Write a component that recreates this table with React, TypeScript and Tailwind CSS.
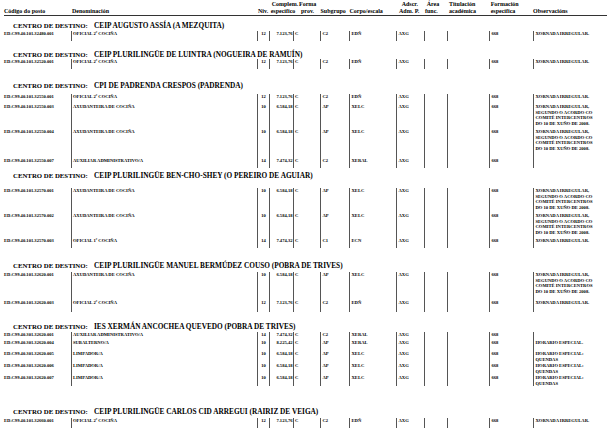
import React from "react";

type R = {
  code: string;
  den: string;
  niv: string;
  comp: string;
  sub: string;
  corpo: string;
  obs: string[];
  h: string;
};
type S = { name: string; mt: string; rmt: string; rows: R[] };

const OBS4 = ["XORNADA IRREGULAR,", "SEGUNDO O ACORDO CO", "COMITÉ INTERCENTROS", "DO 10 DE XUÑO DE 2008."];
const XI = ["XORNADA IRREGULAR."];
const HQ = ["HORARIO ESPECIAL:", "QUENDAS"];

const sections: S[] = [
  {
    name: "CEIP AUGUSTO ASSÍA (A MEZQUITA)",
    mt: "mt-[4.5px]",
    rmt: "mt-[1.75px]",
    rows: [
      { code: "ED.C99.40.101.32480.001", den: "OFICIAL 2ª COCIÑA", niv: "12", comp: "7.123,76", sub: "C2", corpo: "EDÑ", obs: XI, h: "h-[10px]" },
    ],
  },
  {
    name: "CEIP PLURILINGÜE DE LUINTRA (NOGUEIRA DE RAMUÍN)",
    mt: "mt-[8.25px]",
    rmt: "mt-[0.75px]",
    rows: [
      { code: "ED.C99.40.101.32520.001", den: "OFICIAL 2ª COCIÑA", niv: "12", comp: "7.123,76", sub: "C2", corpo: "EDÑ", obs: XI, h: "h-[10px]" },
    ],
  },
  {
    name: "CPI DE PADRENDA CRESPOS (PADRENDA)",
    mt: "mt-[11.25px]",
    rmt: "mt-[4.75px]",
    rows: [
      { code: "ED.C99.40.101.32550.001", den: "OFICIAL 2ª COCIÑA", niv: "12", comp: "7.123,76", sub: "C2", corpo: "EDÑ", obs: XI, h: "h-[10px]" },
      { code: "ED.C99.40.101.32550.003", den: "AXUDANTEIRA DE COCIÑA", niv: "10", comp: "6.584,18", sub: "AP", corpo: "XELC", obs: OBS4, h: "h-[25px]" },
      { code: "ED.C99.40.101.32550.004", den: "AXUDANTEIRA DE COCIÑA", niv: "10", comp: "6.584,18", sub: "AP", corpo: "XELC", obs: OBS4, h: "h-[29px]" },
      { code: "ED.C99.40.101.32550.007", den: "AUXILIAR ADMINISTRATIVO/A", niv: "14", comp: "7.474,32", sub: "C2", corpo: "XERAL", obs: [], h: "h-[10px]" },
    ],
  },
  {
    name: "CEIP PLURILINGÜE BEN-CHO-SHEY (O PEREIRO DE AGUIAR)",
    mt: "mt-[2.25px]",
    rmt: "mt-[8.75px]",
    rows: [
      { code: "ED.C99.40.101.32570.001", den: "AXUDANTEIRA DE COCIÑA", niv: "10", comp: "6.584,18", sub: "AP", corpo: "XELC", obs: OBS4, h: "h-[25px]" },
      { code: "ED.C99.40.101.32570.002", den: "AXUDANTEIRA DE COCIÑA", niv: "10", comp: "6.584,18", sub: "AP", corpo: "XELC", obs: OBS4, h: "h-[25px]" },
      { code: "ED.C99.40.101.32570.003", den: "OFICIAL 1ª COCIÑA", niv: "14", comp: "7.474,32", sub: "C1", corpo: "ECN", obs: XI, h: "h-[10px]" },
    ],
  },
  {
    name: "CEIP PLURILINGÜE MANUEL BERMÚDEZ COUSO (POBRA DE TRIVES)",
    mt: "mt-[12.25px]",
    rmt: "mt-[2.75px]",
    rows: [
      { code: "ED.C99.40.101.32620.001", den: "AXUDANTEIRA DE COCIÑA", niv: "10", comp: "6.584,18", sub: "AP", corpo: "XELC", obs: OBS4, h: "h-[28px]" },
      { code: "ED.C99.40.101.32620.003", den: "OFICIAL 2ª COCIÑA", niv: "12", comp: "7.123,76", sub: "C2", corpo: "EDÑ", obs: XI, h: "h-[12px]" },
    ],
  },
  {
    name: "IES XERMÁN ANCOCHEA QUEVEDO (POBRA DE TRIVES)",
    mt: "mt-[9.25px]",
    rmt: "mt-[1.75px]",
    rows: [
      { code: "ED.C99.40.301.32620.001", den: "AUXILIAR ADMINISTRATIVO/A", niv: "14", comp: "7.474,32", sub: "C2", corpo: "XERAL", obs: [], h: "h-[8px]" },
      { code: "ED.C99.40.301.32620.004", den: "SUBALTERNO/A", niv: "10", comp: "8.225,42", sub: "AP", corpo: "XERAL", obs: ["HORARIO ESPECIAL."], h: "h-[11px]" },
      { code: "ED.C99.40.301.32620.005", den: "LIMPADOR/A", niv: "10", comp: "6.584,18", sub: "AP", corpo: "XELC", obs: HQ, h: "h-[12px]" },
      { code: "ED.C99.40.301.32620.006", den: "LIMPADOR/A", niv: "10", comp: "6.584,18", sub: "AP", corpo: "XELC", obs: HQ, h: "h-[12px]" },
      { code: "ED.C99.40.301.32620.007", den: "LIMPADOR/A", niv: "10", comp: "6.584,18", sub: "AP", corpo: "XELC", obs: HQ, h: "h-[11px]" },
    ],
  },
  {
    name: "CEIP PLURILINGÜE CARLOS CID ARREGUI (RAIRIZ DE VEIGA)",
    mt: "mt-[20.25px]",
    rmt: "mt-[2.75px]",
    rows: [
      { code: "ED.C99.40.101.32660.001", den: "OFICIAL 2ª COCIÑA", niv: "12", comp: "7.123,76", sub: "C2", corpo: "EDÑ", obs: XI, h: "h-[10px]" },
    ],
  },
];

function Row({ r }: { r: R }) {
  const b = "border-l border-[#555]";
  return (
    <div className={`flex text-[4.6px] leading-[5.5px] font-bold whitespace-nowrap ${r.h}`}>
      <div className="w-[71px] shrink-0 pl-[4px]">{r.code}</div>
      <div className={`w-[186px] shrink-0 pl-[1px] ${b}`}>{r.den}</div>
      <div className={`w-[12px] shrink-0 text-center ${b}`}>{r.niv}</div>
      <div className={`w-[24px] shrink-0 text-right pr-[0.5px] ${b}`}>{r.comp}</div>
      <div className={`w-[27px] shrink-0 pl-[1px] ${b}`}>C</div>
      <div className={`w-[29px] shrink-0 pl-[1.5px] ${b}`}>{r.sub}</div>
      <div className={`w-[47px] shrink-0 pl-[1.5px] ${b}`}>{r.corpo}</div>
      <div className={`w-[28px] shrink-0 pl-[1.5px] ${b}`}>AXG</div>
      <div className={`w-[23px] shrink-0 ${b}`}></div>
      <div className={`w-[42px] shrink-0 ${b}`}></div>
      <div className={`w-[44px] shrink-0 pl-[1.5px] ${b}`}>668</div>
      <div className={`flex-1 pl-[1.5px] ${b}`}>
        {r.obs.map((l, i) => (
          <div key={i}>{l}</div>
        ))}
      </div>
    </div>
  );
}

function Section({ s }: { s: S }) {
  return (
    <div className={s.mt}>
      <div className="flex items-baseline h-[9px] leading-[9px] font-bold whitespace-nowrap">
        <div className="w-[94px] shrink-0 pl-[13px] text-[6.8px]">CENTRO DE DESTINO:</div>
        <div className="text-[7.3px]">{s.name}</div>
      </div>
      <div className={s.rmt}>
        {s.rows.map((r, i) => (
          <Row key={i} r={r} />
        ))}
      </div>
    </div>
  );
}

export default function App() {
  return (
    <div className="w-[615px] h-[439px] overflow-hidden bg-white text-black font-['Liberation_Serif',serif]">
      <div className="flex h-[15px] pt-[1px] text-[6px] leading-[7px] font-bold whitespace-nowrap">
        <div className="w-[71px] shrink-0 pl-[4px] pt-[7px]">Código do posto</div>
        <div className="w-[186px] shrink-0 pl-[1px] pt-[7px]">Denominación</div>
        <div className="w-[12px] shrink-0 pl-[1px] pt-[7px]">Niv.</div>
        <div className="w-[24px] shrink-0">
          <div className="pl-[2.7px]">Complem.</div>
          <div className="pl-[1.7px]">específico</div>
        </div>
        <div className="w-[27px] shrink-0">
          <div className="pl-[6px]">Forma</div>
          <div className="pl-[8px]">prov.</div>
        </div>
        <div className="w-[29px] shrink-0 pl-[0.5px] pt-[7px]">Subgrupo</div>
        <div className="w-[47px] shrink-0 pl-[0.5px] pt-[7px]">Corpo/escala</div>
        <div className="w-[28px] shrink-0">
          <div className="pl-[5.7px]">Adscr.</div>
          <div className="pl-[3px]">Adm. P.</div>
        </div>
        <div className="w-[23px] shrink-0">
          <div className="pl-[2.7px]">Área</div>
          <div className="pl-[1px]">func.</div>
        </div>
        <div className="w-[42px] shrink-0 pl-[2px]">
          <div>Titulación</div>
          <div>académica</div>
        </div>
        <div className="w-[44px] shrink-0 pl-[1.7px]">
          <div>Formación</div>
          <div>específica</div>
        </div>
        <div className="flex-1 pt-[7px]">Observacións</div>
      </div>
      <div className="ml-[4px] w-[603px] h-px bg-[#333]"></div>
      {sections.map((s, i) => (
        <Section key={i} s={s} />
      ))}
    </div>
  );
}
